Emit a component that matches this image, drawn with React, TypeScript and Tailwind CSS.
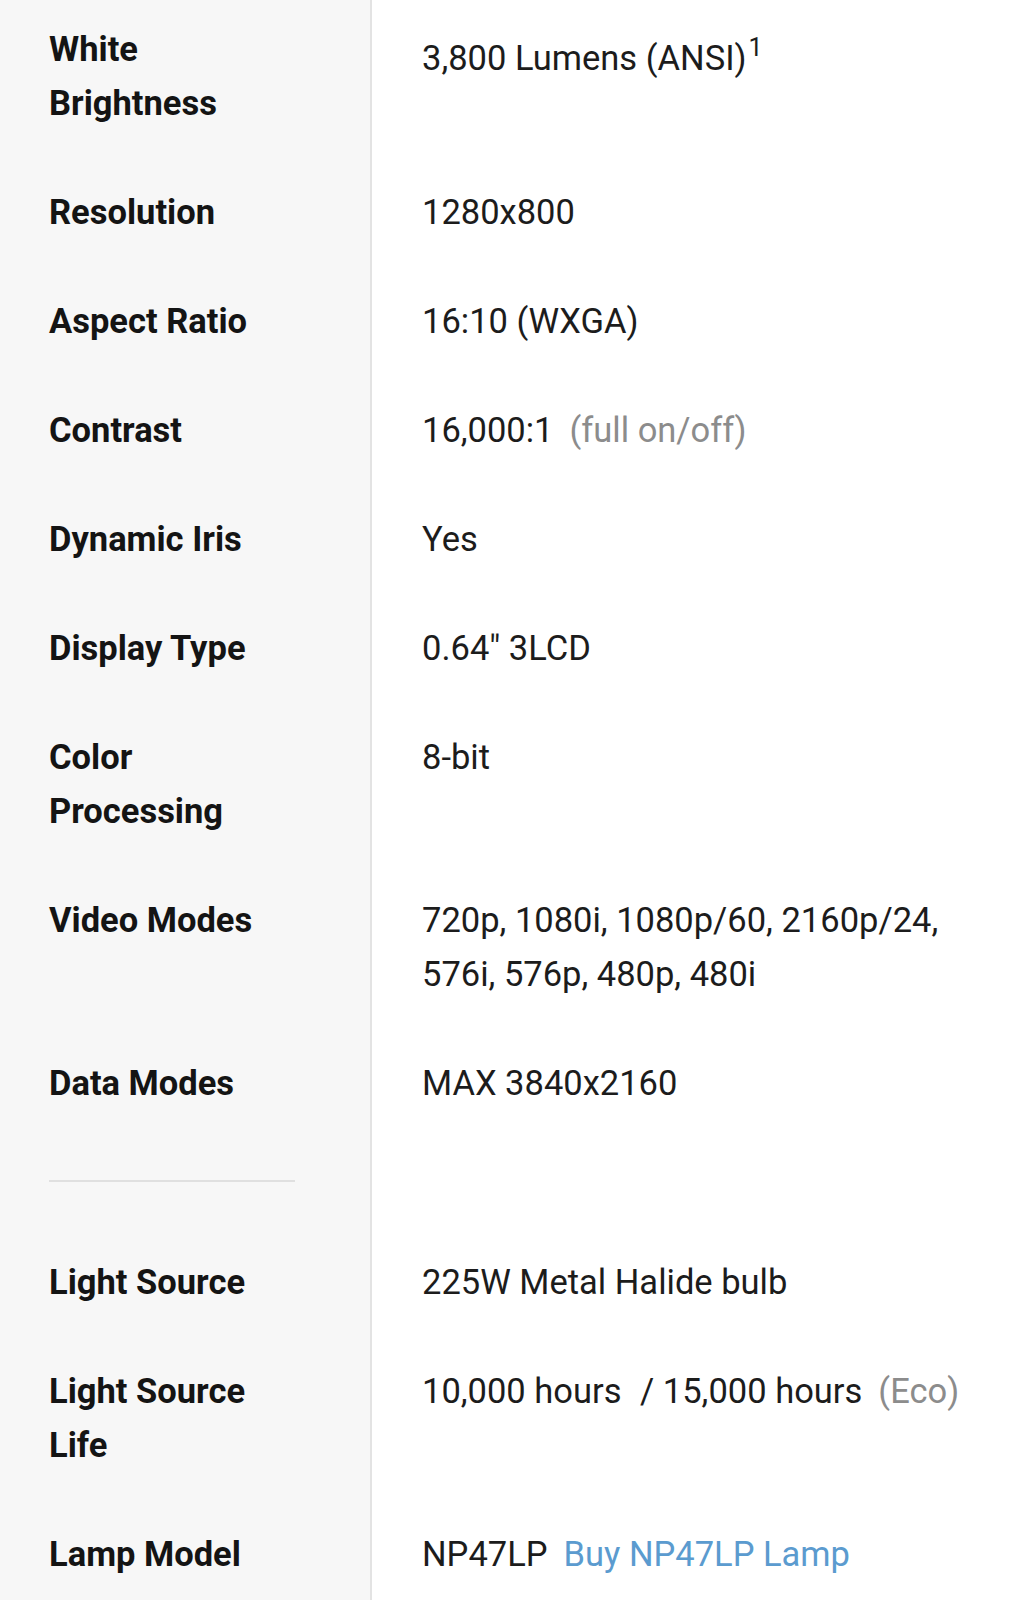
import React from "react";

type Row = {
  label: React.ReactNode;
  value: React.ReactNode;
  first?: boolean;
};

const Muted = ({ children }: { children: React.ReactNode }) => (
  <span className="ml-[16px] text-[#8c8c8c]">{children}</span>
);

const topRows: Row[] = [
  {
    label: (
      <>
        White
        <br />
        Brightness
      </>
    ),
    value: (
      <>
        3,800 Lumens (ANSI)
        <sup className="relative -top-[14px] ml-[2px] text-[25px] align-baseline leading-none">1</sup>
      </>
    ),
    first: true,
  },
  { label: "Resolution", value: "1280x800" },
  { label: "Aspect Ratio", value: "16:10 (WXGA)" },
  {
    label: "Contrast",
    value: (
      <>
        16,000:1<Muted>(full on/off)</Muted>
      </>
    ),
  },
  { label: "Dynamic Iris", value: "Yes" },
  { label: "Display Type", value: '0.64" 3LCD' },
  {
    label: (
      <>
        Color
        <br />
        Processing
      </>
    ),
    value: "8-bit",
  },
  { label: "Video Modes", value: "720p, 1080i, 1080p/60, 2160p/24, 576i, 576p, 480p, 480i" },
  { label: "Data Modes", value: "MAX 3840x2160" },
];

const bottomRows: Row[] = [
  { label: "Light Source", value: "225W Metal Halide bulb" },
  {
    label: (
      <>
        Light Source
        <br />
        Life
      </>
    ),
    value: (
      <>
        10,000 hours <span className="ml-[10px]">/ 15,000 hours</span>
        <Muted>(Eco)</Muted>
      </>
    ),
  },
  {
    label: "Lamp Model",
    value: (
      <>
        NP47LP<span className="ml-[16px] text-[#5b9bcf]">Buy NP47LP Lamp</span>
      </>
    ),
  },
];

function SpecRow({ row }: { row: Row }) {
  return (
    <div className="flex">
      <div
        className={`w-[372px] shrink-0 bg-[#f7f7f7] border-r-2 border-[#e3e3e3] pl-[49px] pb-[31px] font-bold text-[#141414] ${
          row.first ? "pt-[22px]" : "pt-[24px]"
        }`}
      >
        {row.label}
      </div>
      <div
        className={`flex-1 pl-[50px] pr-[30px] pb-[31px] text-[#1c1c1c] ${
          row.first ? "pt-[31px]" : "pt-[24px]"
        }`}
      >
        {row.value}
      </div>
    </div>
  );
}

export default function App() {
  return (
    <div
      className="w-[1021px] bg-white text-[34.5px] leading-[54px]"
      style={{ fontFamily: "Roboto, 'Noto Sans', sans-serif" }}
    >
      {topRows.map((row, i) => (
        <SpecRow key={i} row={row} />
      ))}

      {/* section divider */}
      <div className="flex">
        <div className="w-[372px] shrink-0 bg-[#f7f7f7] border-r-2 border-[#e3e3e3] pl-[49px] pt-[39px] pb-[49px]">
          <div className="w-[246px] h-[2px] bg-[#e0e0e0]" />
        </div>
        <div className="flex-1" />
      </div>

      {bottomRows.map((row, i) => (
        <SpecRow key={i} row={row} />
      ))}
    </div>
  );
}
